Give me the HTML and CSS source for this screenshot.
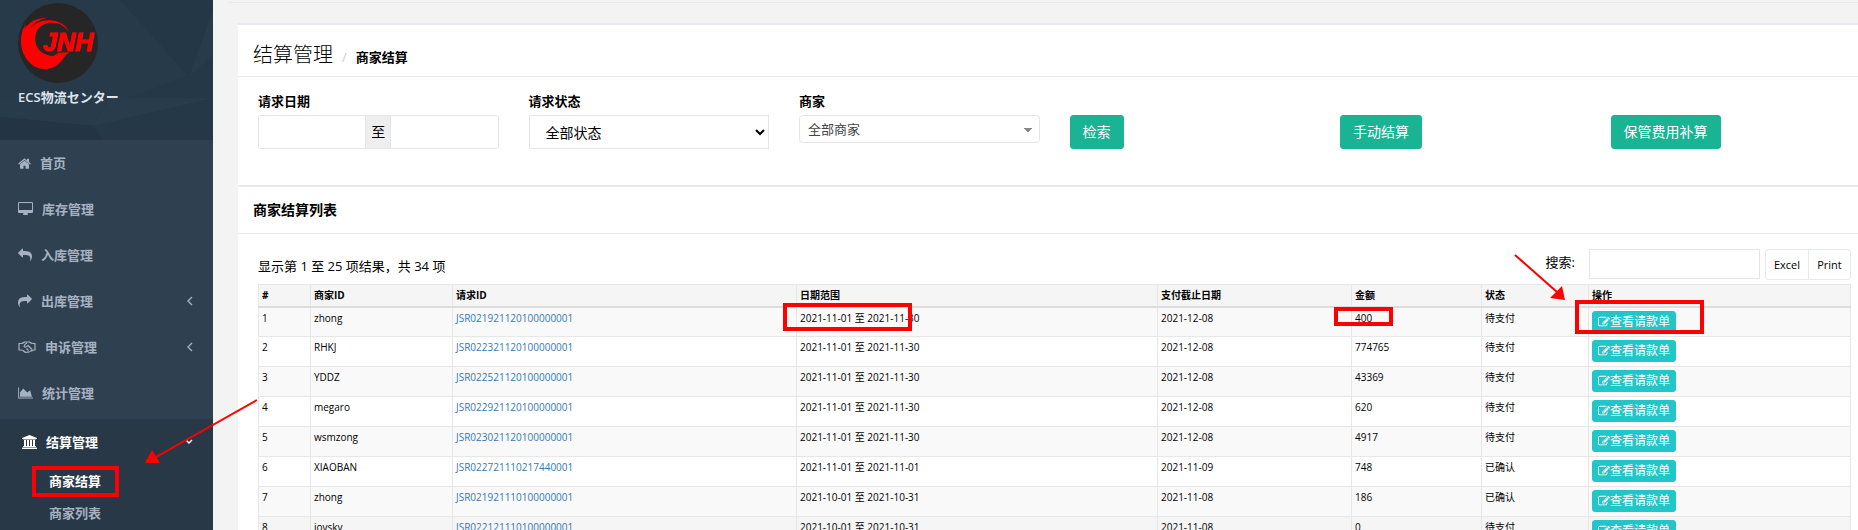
FILE: index.html
```html
<!DOCTYPE html>
<html lang="zh-CN">
<head>
<meta charset="utf-8">
<title>商家结算</title>
<link rel="stylesheet" href="styles.css">
</head>
<body>
<svg class="defs" aria-hidden="true">
  <symbol id="i-edit" viewBox="0 0 1792 1792"><path d="M888 1184l116-116-152-152-116 116v56h96v96h56zm440-720q-16-16-33 1l-350 350q-17 17-1 33t33-1l350-350q17-17 1-33zm80 594v190q0 119-84.500 203.500t-203.500 84.500h-832q-119 0-203.500-84.500t-84.500-203.500v-832q0-119 84.500-203.500t203.500-84.500h832q63 0 117 25 15 7 18 23 3 17-9 29l-49 49q-14 14-32 8-23-6-45-6h-832q-66 0-113 47t-47 113v832q0 66 47 113t113 47h832q66 0 113-47t47-113v-126q0-13 9-22l64-64q15-15 35-7t20 29zm-96-738l288 288-672 672h-288v-288zm444 132l-92 92-288-288 92-92q28-28 68-28t68 28l152 152q28 28 28 68t-28 68z"/></symbol>
</svg>
<div class="layout">
  <aside class="sidebar">
    <header class="profile">
      <svg class="facets" viewBox="0 0 213 140" preserveAspectRatio="none" aria-hidden="true">
        <path fill="#263a4a" d="M0 0h120l69 75-60 23-129 0z"/>
        <path fill="#243747" d="M120 0h93v10l-24 67z"/>
        <path fill="#273b4a" d="M213 10v45l-24 22z"/>
        <path fill="#273b4a" d="M0 98h110l-17 28-93-9z"/>
        <path fill="#233545" d="M0 117l93 9 11 14h-104z"/>
        <path fill="#283c4b" d="M110 98h103l-120 28z"/>
      </svg>
      <svg class="logo" viewBox="0 0 240 240" role="img" aria-label="JNH">
        <circle cx="120" cy="120" r="120" fill="#262626"/>
        <g fill="#f00">
          <path d="M151 87C140 66 118 56 90 60C62 66 50 88 52 112C54 136 70 154 96 158C108 160 118 158 126 156L106 159L122 149L154 148L148 153C140 156 136 172 118 186C98 202 62 204 38 182C12 158 4 124 12 94C22 64 48 44 86 45C64 50 46 60 36 78C56 52 92 46 122 58C138 64 148 74 151 87z"/>
          <path d="M10 118C8 94 14 76 24 64C18 82 16 100 18 116z"/>
        </g>
        <text x="74" y="143" class="logo-text">JNH</text>
      </svg>
      <strong class="profile-name">ECS物流センター</strong>
    </header>
    <nav>
      <ul class="menu">
        <li><a href="#"><svg width="13" height="13" viewBox="64 128 1664 1500"><path d="M1472 992v480q0 26-19 45t-45 19h-384v-384h-256v384h-384q-26 0-45-19t-19-45v-480q0-1 .5-3t.5-3l575-474 575 474q1 2 1 6zm223-69l-62 74q-8 9-21 11h-3q-13 0-21-7l-692-577-692 577q-12 8-24 7-13-2-21-11l-62-74q-8-10-7-23.500t11-21.500l719-599q32-26 76-26t76 26l244 204v-195q0-14 9-23t23-9h192q14 0 23 9t9 23v408l219 182q10 8 11 21.500t-7 23.500z"/></svg>首页</a></li>
        <li><a href="#"><svg width="15" height="14" viewBox="-64 0 1920 1792"><path d="M1728 992v-832q0-13-9.500-22.500t-22.500-9.500h-1600q-13 0-22.500 9.500t-9.500 22.500v832q0 13 9.500 22.500t22.500 9.500h1600q13 0 22.500-9.500t9.500-22.500zm128-832v1088q0 66-47 113t-113 47h-544q0 37 16 77.500t32 71 16 43.500q0 26-19 45t-45 19h-512q-26 0-45-19t-19-45q0-14 16-44t32-70 16-78h-544q-66 0-113-47t-47-113v-1088q0-66 47-113t113-47h1600q66 0 113 47t47 113z"/></svg>库存管理</a></li>
        <li><a href="#"><svg width="14" height="14" viewBox="0 0 1792 1792"><path d="M1792 1120q0 166-127 451-3 7-10.500 24t-13.500 30-13 22q-12 17-28 17-15 0-23.500-10t-8.500-25q0-9 2.500-26.500t2.500-23.500q5-68 5-123 0-101-17.500-181t-48.500-138.500-80-101-105.500-69.500-133-42.500-154-21.500-175.500-6h-224v256q0 26-19 45t-45 19-45-19l-512-512q-19-19-19-45t19-45l512-512q19-19 45-19t45 19 19 45v256h224q713 0 875 403 53 134 53 333z"/></svg>入库管理</a></li>
        <li><a href="#"><svg width="14" height="14" viewBox="0 0 1792 1792"><path transform="matrix(-1 0 0 1 1792 0)" d="M1792 1120q0 166-127 451-3 7-10.500 24t-13.500 30-13 22q-12 17-28 17-15 0-23.500-10t-8.500-25q0-9 2.500-26.500t2.500-23.500q5-68 5-123 0-101-17.500-181t-48.500-138.500-80-101-105.500-69.500-133-42.500-154-21.500-175.500-6h-224v256q0 26-19 45t-45 19-45-19l-512-512q-19-19-19-45t19-45l512-512q19-19 45-19t45 19 19 45v256h224q713 0 875 403 53 134 53 333z"/></svg>出库管理<svg class="chevron" width="6" height="10" viewBox="0 0 6 10"><path class="line" d="M5 1L1 5l4 4"/></svg></a></li>
        <li><a href="#"><svg width="18" height="12" viewBox="0 0 36 24"><path class="line thick" d="M2 5v13M34 5v13M1 5h5q4 0 7-3h10q3 3 7 3h5M1 18h5q3 0 5 2 4 4 8 2 4 1 6-2 3 0 5-2h5M18 4q-5 2-6 7 4 3 8-2l8 8M17 15l4 4"/></svg>申诉管理<svg class="chevron" width="6" height="10" viewBox="0 0 6 10"><path class="line" d="M5 1L1 5l4 4"/></svg></a></li>
        <li><a href="#"><svg width="15" height="12" viewBox="0 64 2048 1664"><path d="M2048 1536v128h-2048v-1536h128v1408h1920zm-384-1024l256 896h-1664v-576l448-576 576 576z"/></svg>统计管理</a></li>
      </ul>
      <div class="active-group">
        <a href="#" class="active-link"><svg width="15" height="14" viewBox="0 0 1920 1792"><path d="M960 0l960 384v128h-128q0 26-20.500 45t-48.500 19h-1526q-28 0-48.500-19t-20.500-45h-128v-128zm-704 640h256v768h128v-768h256v768h128v-768h256v768h128v-768h256v768h59q28 0 48.500 19t20.500 45v64h-1664v-64q0-26 20.500-45t48.500-19h59v-768zm1595 960q28 0 48.500 19t20.500 45v128h-1920v-128q0-26 20.500-45t48.500-19h1782z"/></svg>结算管理<svg class="chevron" width="8" height="6" viewBox="0 0 8 6"><path class="line" d="M1 1l3 3 3-3"/></svg></a>
        <ul class="submenu">
          <li><a href="#" class="current">商家结算</a></li>
          <li><a href="#">商家列表</a></li>
        </ul>
      </div>
    </nav>
  </aside>

  <main class="content">
    <section class="box">
      <div class="box-title crumbs"><h1>结算管理</h1><span class="slash">/</span><strong>商家结算</strong></div>
      <form class="filters">
        <div class="field">
          <label for="from">请求日期</label>
          <div class="range"><input id="from" type="text"><span>至</span><input type="text" aria-label="结束日期"></div>
        </div>
        <div class="field">
          <label for="state">请求状态</label>
          <select id="state" class="state"><option>全部状态</option></select>
        </div>
        <div class="field">
          <label for="shop">商家</label>
          <select id="shop" class="shop"><option>全部商家</option></select>
        </div>
        <button type="button" class="primary">检索</button>
        <button type="button" class="primary">手动结算</button>
        <button type="button" class="primary">保管费用补算</button>
      </form>
    </section>

    <section class="box">
      <div class="box-title"><h2>商家结算列表</h2></div>
      <div class="list">
        <div class="tools">
          <p>显示第 1 至 25 项结果，共 34 项</p>
          <label for="search">搜索:</label>
          <input id="search" type="search">
          <div class="exports"><button type="button">Excel</button><button type="button">Print</button></div>
        </div>
        <table>
          <colgroup><col class="c-no"><col class="c-shop"><col class="c-req"><col class="c-range"><col class="c-due"><col class="c-sum"><col class="c-state"><col class="c-act"></colgroup>
          <thead><tr><th>#</th><th>商家ID</th><th>请求ID</th><th>日期范围</th><th>支付截止日期</th><th>金额</th><th>状态</th><th>操作</th></tr></thead>
          <tbody>
            <tr><td>1</td><td>zhong</td><td><a href="#">JSR021921120100000001</a></td><td>2021-11-01 至 2021-11-30</td><td>2021-12-08</td><td>400</td><td>待支付</td><td><button type="button" class="view"><svg><use href="#i-edit"/></svg>查看请款单</button></td></tr>
            <tr><td>2</td><td>RHKJ</td><td><a href="#">JSR022321120100000001</a></td><td>2021-11-01 至 2021-11-30</td><td>2021-12-08</td><td>774765</td><td>待支付</td><td><button type="button" class="view"><svg><use href="#i-edit"/></svg>查看请款单</button></td></tr>
            <tr><td>3</td><td>YDDZ</td><td><a href="#">JSR022521120100000001</a></td><td>2021-11-01 至 2021-11-30</td><td>2021-12-08</td><td>43369</td><td>待支付</td><td><button type="button" class="view"><svg><use href="#i-edit"/></svg>查看请款单</button></td></tr>
            <tr><td>4</td><td>megaro</td><td><a href="#">JSR022921120100000001</a></td><td>2021-11-01 至 2021-11-30</td><td>2021-12-08</td><td>620</td><td>待支付</td><td><button type="button" class="view"><svg><use href="#i-edit"/></svg>查看请款单</button></td></tr>
            <tr><td>5</td><td>wsmzong</td><td><a href="#">JSR023021120100000001</a></td><td>2021-11-01 至 2021-11-30</td><td>2021-12-08</td><td>4917</td><td>待支付</td><td><button type="button" class="view"><svg><use href="#i-edit"/></svg>查看请款单</button></td></tr>
            <tr><td>6</td><td>XIAOBAN</td><td><a href="#">JSR022721110217440001</a></td><td>2021-11-01 至 2021-11-01</td><td>2021-11-09</td><td>748</td><td>已确认</td><td><button type="button" class="view"><svg><use href="#i-edit"/></svg>查看请款单</button></td></tr>
            <tr><td>7</td><td>zhong</td><td><a href="#">JSR021921110100000001</a></td><td>2021-10-01 至 2021-10-31</td><td>2021-11-08</td><td>186</td><td>已确认</td><td><button type="button" class="view"><svg><use href="#i-edit"/></svg>查看请款单</button></td></tr>
            <tr class="hovered"><td>8</td><td>joysky</td><td><a href="#">JSR022121110100000001</a></td><td>2021-10-01 至 2021-10-31</td><td>2021-11-08</td><td>0</td><td>待支付</td><td><button type="button" class="view"><svg><use href="#i-edit"/></svg>查看请款单</button></td></tr>
          </tbody>
        </table>
      </div>
    </section>
  </main>
</div>
<svg class="marks" width="1858" height="530" viewBox="0 0 1858 530" aria-hidden="true">
  <g fill="none" stroke="#f00" stroke-width="4">
    <rect x="34" y="468" width="83" height="27"/>
    <rect x="785" y="305" width="125" height="24"/>
    <rect x="1336" y="309" width="55" height="15"/>
    <rect x="1577" y="302" width="125" height="30"/>
  </g>
  <g stroke="#f00" stroke-width="2" fill="#f00">
    <path d="M257 400L156 457M1515 255l42 37"/>
    <path stroke="none" d="M145 463l7-13 8 13zM1565 300l-3-14-12 12z"/>
  </g>
</svg>
</body>
</html>
```
FILE: styles.css
```css
* { box-sizing: border-box; }
body {
  margin: 0;
  height: 100vh;
  overflow: hidden;
  background: #f3f3f4;
  color: #000;
  font: 13px/18px "Open Sans", "Noto Sans CJK SC", sans-serif;
}
h1, h2, p, ul { margin: 0; padding: 0; }
ul { list-style: none; }
a { text-decoration: none; color: #337ab7; }
button, input, select { font: inherit; margin: 0; }
.defs { position: absolute; width: 0; height: 0; }
.layout { display: flex; min-height: 100vh; }

.sidebar { flex: 0 0 213px; background: #2f4050; }
.profile {
  position: relative;
  height: 140px;
  padding: 3px 18px;
  background: #253847;
}
.facets { position: absolute; inset: 0; width: 100%; height: 100%; }
.logo { position: relative; display: block; width: 80px; height: 80px; overflow: visible; }
.logo-text { font: italic bold 76px "Liberation Sans", sans-serif; fill: #f00; stroke: #f00; stroke-width: 3; }
.profile-name { position: relative; display: block; margin-top: 5px; color: #dfe4ed; font-weight: 600; }
.menu { padding-bottom: 3px; }
.menu a, .active-link {
  display: flex;
  align-items: center;
  gap: 9px;
  height: 46px;
  padding: 0 20px 0 18px;
  color: #a7b1c2;
  font-weight: 600;
}
.sidebar svg { flex: none; fill: currentColor; }
.sidebar .line { fill: none; stroke: currentColor; stroke-width: 1.4; }
.sidebar .thick { stroke-width: 2.4; }
.menu .chevron, .active-link .chevron { margin-left: auto; }
.active-group { background: #293846; min-height: 120px; }
.active-group .active-link { padding-left: 22px; color: #fff; }
.submenu a { display: block; padding: 7px 10px 7px 49px; color: #a7b1c2; font-weight: 600; }
.submenu .current { color: #fff; }

.content { flex: 1; min-width: 0; margin: 2px 0 0 15px; padding: 20px 0 0 10px; border-top: 1px solid #e7eaec; }
.box { background: #fff; border-top: 2px solid #e7eaec; }
.box-title {
  display: flex;
  align-items: center;
  height: 47px;
  padding: 0 15px;
  border-bottom: 1px solid #e7eaec;
}
.box-title h2 { font-size: 14px; line-height: 20px; font-weight: 700; }
.crumbs { height: 52px; align-items: baseline; padding-top: 16px; }
.crumbs h1 { font-size: 20px; line-height: 28px; font-weight: 300; }
.slash { padding: 0 9px; color: #ccc; }
.filters {
  display: grid;
  grid-template-columns: repeat(6, minmax(0, 1fr));
  column-gap: 30px;
  padding: 15px 7px 36px 20px;
}
.field label { display: block; height: 18px; margin-bottom: 5px; font-weight: 700; }
.range { display: flex; height: 34px; border: 1px solid #e5e6e7; border-radius: 3px; overflow: hidden; }
.range input { flex: 1; min-width: 0; border: 0; background: #fff; }
.range span { width: 26px; border: 1px solid #e5e6e7; border-width: 0 1px; background: #eee; font-size: 14px; line-height: 32px; text-align: center; }
.state { width: 100%; height: 34px; padding: 0 0 0 12px; border: 1px solid #e5e6e7; background: #fff; color: #000; font-size: 14px; }
.shop {
  width: 100%;
  height: 28px;
  padding: 0 8px;
  appearance: none;
  border: 1px solid #e5e6e7;
  border-radius: 4px;
  background: #fff conic-gradient(from -39deg at 50% 100%, #888 78deg, transparent 0) no-repeat right 7px top 12px / 8px 5px;
  color: #444;
}
.primary {
  justify-self: start;
  height: 34px;
  margin-top: 23px;
  padding: 0 12px;
  border: 1px solid #1ab394;
  border-radius: 3px;
  background: #1ab394;
  color: #fff;
  font-size: 14px;
}

.list { padding: 15px 7px 0 20px; }
.tools { display: flex; height: 35px; }
.tools p { margin: 8px auto 0 0; }
.tools label { margin: 4px 14px 0 0; }
.tools input { width: 171px; height: 30px; margin-right: 5px; border: 1px solid #e5e6e7; background: #fff; }
.exports { display: flex; height: 31px; border: 1px solid #e7eaec; border-radius: 3px; }
.exports button { width: 42px; padding: 0; border: 0; background: none; color: #000; font-size: 11px; }
.exports button + button { border-left: 1px solid #e7eaec; }
table { width: 100%; table-layout: fixed; border-collapse: collapse; font-size: 10px; line-height: 14px; }
th, td { padding: 3px; text-align: left; vertical-align: top; border: 1px solid #e7e7e7; }
th { height: 22px; background: #f5f5f6; border-bottom: 2px solid #ddd; font-weight: 700; }
td { height: 30px; }
tbody tr:nth-child(odd) { background: #f9f9f9; }
tbody .hovered { background: #f5f5f5; }
.c-no { width: 52px; } .c-shop { width: 142px; } .c-req { width: 344px; } .c-range { width: 361px; }
.c-due { width: 194px; } .c-sum { width: 130px; } .c-state { width: 107px; } .c-act { width: 262px; }
.view {
  display: flex;
  align-items: center;
  height: 22px;
  padding: 0 5px;
  border: 1px solid #23c6c8;
  border-radius: 3px;
  background: #23c6c8;
  color: #fff;
  font-size: 12px;
  line-height: 18px;
}
.view svg { width: 12px; height: 12px; fill: currentColor; }
.marks { position: absolute; left: 0; top: 0; pointer-events: none; }
```
